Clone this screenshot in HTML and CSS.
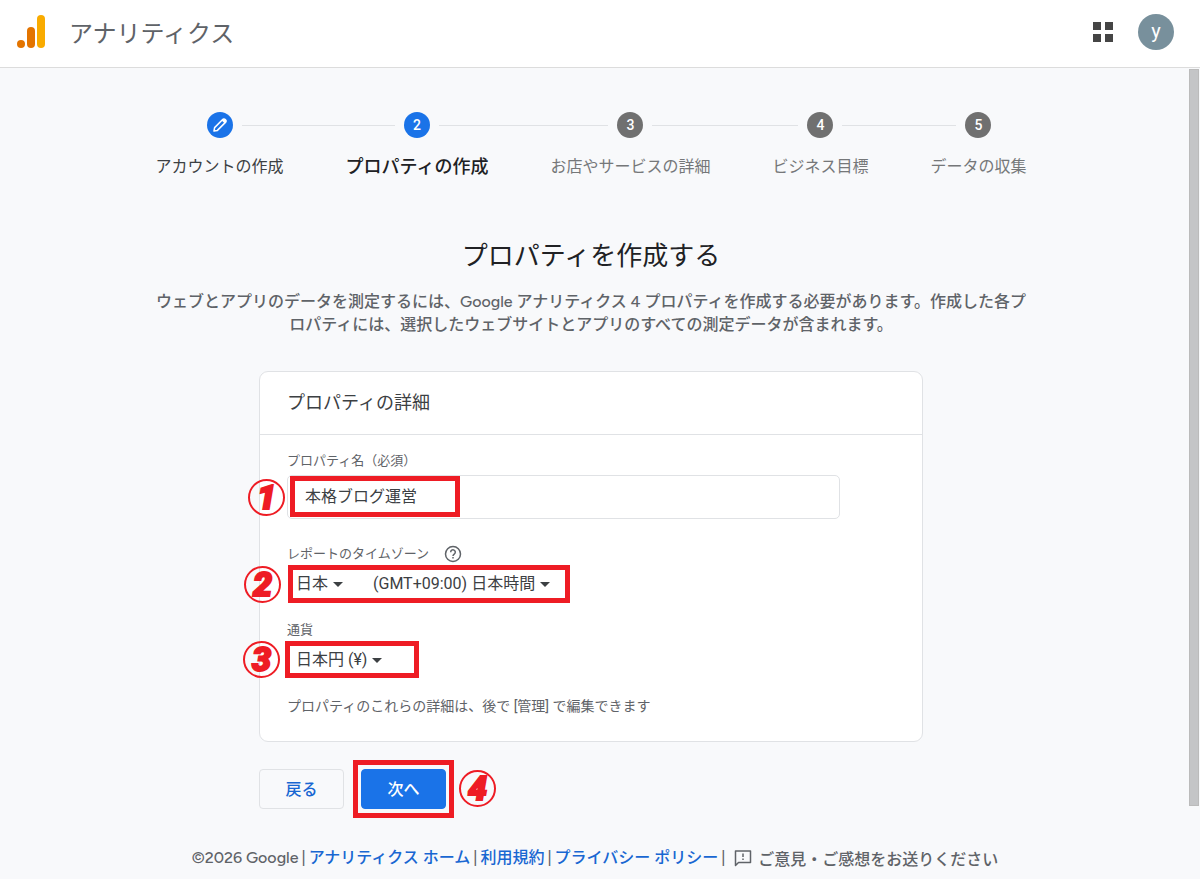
FILE: index.html
```html
<!DOCTYPE html>
<html lang="ja">
<head>
  <meta charset="UTF-8">
  <meta name="viewport" content="width=device-width, initial-scale=1.0">
  <title>アナリティクス</title>
  <link rel="stylesheet" href="styles.css">
</head>
<body>
  <header class="topbar">
    <a href="#" class="brand">
      <svg class="logo" width="30" height="34" viewBox="0 0 30 34">
        <rect x="20" y="0" width="8" height="33" rx="4" fill="#f9ab00"/>
        <rect x="10" y="12" width="8" height="21" rx="4" fill="#e37400"/>
        <circle cx="4" cy="29" r="4" fill="#e37400"/>
      </svg>
      <span>アナリティクス</span>
    </a>
    <div class="topbar-right">
      <button type="button" class="apps" aria-label="アプリ">
        <svg width="22" height="22" viewBox="0 0 22 22" fill="#454545">
          <rect x="1" y="1" width="8" height="8"/>
          <rect x="13" y="1" width="8" height="8"/>
          <rect x="1" y="13" width="8" height="8"/>
          <rect x="13" y="13" width="8" height="8"/>
        </svg>
      </button>
      <button type="button" class="avatar">y</button>
    </div>
  </header>

  <div class="page">
    <div class="content">
      <ol class="stepper">
        <li class="step done">
          <div class="step-head">
            <span class="dot">
              <svg width="18" height="18" viewBox="0 0 18 18">
                <path d="M3 15l.6-3.400L11.900 3.300a1.400 1.400 0 0 1 2 0l.8.800a1.400 1.400 0 0 1 0 2L6.400 14.400z" fill="none" stroke="#fff" stroke-width="1.500" stroke-linejoin="round"/>
                <path d="M10.700 4.500l2.800 2.800 1.400-1.400a1.400 1.400 0 0 0 0-1.800l-1-1a1.400 1.400 0 0 0-1.800 0z" fill="#fff"/>
              </svg>
            </span>
          </div>
          <span class="step-label">アカウントの作成</span>
        </li>
        <li class="step current">
          <div class="step-head"><span class="dot">2</span></div>
          <span class="step-label">プロパティの作成</span>
        </li>
        <li class="step">
          <div class="step-head"><span class="dot">3</span></div>
          <span class="step-label">お店やサービスの詳細</span>
        </li>
        <li class="step">
          <div class="step-head"><span class="dot">4</span></div>
          <span class="step-label">ビジネス目標</span>
        </li>
        <li class="step">
          <div class="step-head"><span class="dot">5</span></div>
          <span class="step-label">データの収集</span>
        </li>
      </ol>

      <h1>プロパティを作成する</h1>
      <p class="intro">ウェブとアプリのデータを測定するには、Google アナリティクス 4 プロパティを作成する必要があります。作成した各プロパティには、選択したウェブサイトとアプリのすべての測定データが含まれます。</p>

      <form class="property-form">
        <section class="card">
          <h2>プロパティの詳細</h2>
          <div class="card-body">
            <label for="propName">プロパティ名（必須）</label>
            <div class="field name-field">
              <input type="text" id="propName" value="本格ブログ運営">
              <span class="mark mark-1"></span>
              <span class="num num-1">1</span>
            </div>

            <div class="label-row">
              <label for="country">レポートのタイムゾーン</label>
              <svg width="18" height="18" viewBox="0 0 18 18" fill="none" stroke="#5f6368" stroke-width="1.500">
                <circle cx="9" cy="9" r="7.500"/>
                <path d="M6.700 7.200a2.300 2.300 0 1 1 3.700 1.800c-.9.700-1.400 1-1.400 2"/>
                <path d="M9 12v1.600"/>
              </svg>
            </div>
            <div class="field select-row">
              <div class="picker">
                <select id="country"><option>日本</option></select>
                <svg width="10" height="5" viewBox="0 0 10 5"><path d="M0 0h10L5 5z" fill="#3c4043"/></svg>
              </div>
              <div class="picker">
                <select aria-label="タイムゾーン"><option>(GMT+09:00) 日本時間</option></select>
                <svg width="10" height="5" viewBox="0 0 10 5"><path d="M0 0h10L5 5z" fill="#3c4043"/></svg>
              </div>
              <span class="mark mark-2"></span>
              <span class="num num-2">2</span>
            </div>

            <label for="currency" class="currency-label">通貨</label>
            <div class="field select-row">
              <div class="picker">
                <select id="currency"><option>日本円 (¥)</option></select>
                <svg width="10" height="5" viewBox="0 0 10 5"><path d="M0 0h10L5 5z" fill="#3c4043"/></svg>
              </div>
              <span class="mark mark-3"></span>
              <span class="num num-3">3</span>
            </div>

            <p class="hint">プロパティのこれらの詳細は、後で [管理] で編集できます</p>
          </div>
        </section>

        <div class="actions">
          <button type="button" class="btn">戻る</button>
          <div class="next-wrap">
            <button type="submit" class="btn primary">次へ</button>
            <span class="mark mark-4"></span>
            <span class="num num-4">4</span>
          </div>
        </div>
      </form>

      <footer class="footer">
        <span>©2026 Google</span>
        <span>|</span>
        <a href="#">アナリティクス ホーム</a>
        <span>|</span>
        <a href="#">利用規約</a>
        <span>|</span>
        <a href="#">プライバシー ポリシー</a>
        <span>|</span>
        <button type="button" class="feedback">
          <svg width="18" height="18" viewBox="0 0 18 18" fill="none" stroke="#5f6368" stroke-width="1.500">
            <path d="M1.500 16.500V2h15v11.500h-12z" stroke-linejoin="round"/>
            <path d="M9 4.500v3.500M9 9.500v1.600"/>
          </svg>
          <span>ご意見・ご感想をお送りください</span>
        </button>
      </footer>
    </div>
    <div class="scroll-track"><div class="scroll-thumb"></div></div>
  </div>
</body>
</html>
```
FILE: styles.css
```css
* {
  box-sizing: border-box;
}

body {
  margin: 0;
  min-height: 100vh;
  display: flex;
  flex-direction: column;
  font-family: Roboto, "Noto Sans CJK JP", sans-serif;
  font-size: 16px;
  color: #3c4043;
  background-color: #f8f9fb;
}

button,
input,
select {
  font-family: inherit;
  font-size: 16px;
  margin: 0;
}

button {
  cursor: pointer;
}

svg {
  display: block;
  flex-shrink: 0;
}

/* Top bar */
.topbar {
  display: flex;
  align-items: center;
  justify-content: space-between;
  height: 68px;
  padding: 0 26px 4px 17px;
  background-color: #fff;
  border-bottom: 1px solid #dcdcdc;
}

.brand {
  display: flex;
  align-items: center;
  gap: 22px;
  font-size: 24px;
  line-height: 36px;
  color: #5f6368;
  text-decoration: none;
}

.brand span {
  padding-top: 4px;
}

.topbar-right {
  display: flex;
  align-items: center;
  gap: 24px;
}

.apps {
  padding: 0;
  border: none;
  background: none;
}

.avatar {
  width: 36px;
  height: 36px;
  padding: 0 0 2px;
  border: none;
  border-radius: 50%;
  font-size: 20px;
  color: #fff;
  background-color: #78909c;
}

/* Page and scrollbar */
.page {
  flex: 1;
  display: flex;
}

.content {
  flex: 1;
  min-width: 0;
  padding-top: 44px;
}

.scroll-track {
  width: 18px;
  padding: 1px 1px 0 7px;
}

.scroll-thumb {
  height: 91%;
  background-color: #c4c5c7;
  border: 1px solid #bbb;
}

/* Stepper */
.stepper {
  display: flex;
  justify-content: center;
  margin: 0;
  padding: 0;
  list-style: none;
}

.step-head {
  display: flex;
  align-items: center;
  gap: 9px;
}

.step-head::before,
.step-head::after {
  content: "";
  flex: 1;
  height: 1px;
  background-color: #e0e2e5;
}

.step:first-child .step-head::before,
.step:last-child .step-head::after {
  background-color: transparent;
}

.dot {
  display: flex;
  align-items: center;
  justify-content: center;
  width: 26px;
  height: 26px;
  border-radius: 50%;
  font-size: 14px;
  font-weight: 500;
  color: #fff;
  background-color: #707070;
}

.done .dot,
.current .dot {
  background-color: #1a73e8;
}

.step-label {
  display: block;
  margin-top: 16px;
  padding: 0 31px;
  line-height: 26px;
  color: #757779;
}

.done .step-label {
  color: #3c4043;
}

.current .step-label {
  font-size: 18px;
  font-weight: 500;
  color: #202124;
}

h1 {
  margin: 56px 0 0;
  text-align: center;
  font-size: 26px;
  font-weight: 400;
  line-height: 40px;
  color: #202124;
}

.intro {
  max-width: 880px;
  margin: 14px auto 0;
  text-align: center;
  font-family: Figtree, "Open Sans", "Noto Sans CJK JP", sans-serif;
  font-weight: 500;
  line-height: 23px;
  color: #5f6368;
}

/* Card */
.property-form {
  max-width: 664px;
  margin: 35px auto 0;
}

.card {
  background-color: #fff;
  border: 1px solid #e0e2e5;
  border-radius: 9px;
}

h2 {
  margin: 0;
  padding: 16px 27px;
  font-size: 18px;
  font-weight: 400;
  line-height: 30px;
  border-bottom: 1px solid #e0e2e5;
}

.card-body {
  padding: 16px 27px 25px;
}

label {
  display: block;
  font-size: 13px;
  line-height: 20px;
  color: #5f6368;
}

.field {
  position: relative;
}

.name-field {
  max-width: 553px;
  margin-top: 4px;
}

.name-field input {
  width: 100%;
  height: 44px;
  padding: 0 17px 4px;
  color: #3c4043;
  background-color: #fff;
  border: 1px solid #e0e2e5;
  border-radius: 5px;
}

.label-row {
  display: flex;
  align-items: center;
  gap: 15px;
  margin-top: 25px;
}

.select-row {
  display: flex;
  align-items: center;
  gap: 30px;
  height: 40px;
  padding-left: 9px;
}

.picker {
  display: flex;
  align-items: center;
  gap: 4px;
}

select {
  appearance: none;
  padding: 0;
  border: none;
  line-height: 24px;
  color: #3c4043;
  background: none;
}

.currency-label {
  margin-top: 16px;
}

.hint {
  margin: 16px 0 0;
  font-size: 14px;
  line-height: 20px;
  color: #5f6368;
}

/* Buttons */
.actions {
  display: flex;
  gap: 17px;
  margin-top: 27px;
}

.btn {
  width: 85px;
  height: 40px;
  padding: 0 0 2px;
  font-weight: 500;
  color: #1967d2;
  background-color: #f8f9fb;
  border: 1px solid #e0e2e5;
  border-radius: 4px;
}

.btn.primary {
  display: block;
  color: #fff;
  background-color: #1a73e8;
  border-color: #1a73e8;
}

.next-wrap {
  position: relative;
}

/* Red guide boxes and numbers over the form */
.mark {
  position: absolute;
  border: 5px solid #ee1c24;
  pointer-events: none;
}

.mark-1 {
  top: 1px;
  left: 3px;
  width: 170px;
  height: 41px;
}

.mark-2 {
  top: 1px;
  left: 1px;
  width: 282px;
  height: 38px;
}

.mark-3 {
  top: 1px;
  left: -2px;
  width: 134px;
  height: 37px;
}

.mark-4 {
  top: -9px;
  left: -8px;
  width: 101px;
  height: 58px;
}

.num {
  position: absolute;
  width: 37px;
  height: 37px;
  border: 2px solid #ee1c24;
  border-radius: 50%;
  font-family: Roboto, sans-serif;
  font-size: 34px;
  font-style: italic;
  font-weight: 900;
  line-height: 33px;
  text-align: center;
  color: #ee1c24;
  -webkit-text-stroke: 2px #ee1c24;
}

.num-1 {
  top: 4px;
  left: -39px;
}

.num-2 {
  top: 2px;
  left: -43px;
}

.num-3 {
  top: 1px;
  left: -44px;
}

.num-4 {
  top: 1px;
  left: 98px;
}

/* Footer */
.footer {
  display: flex;
  justify-content: center;
  align-items: center;
  gap: 3px;
  margin-top: 36px;
  padding-left: 8px;
  font-family: Figtree, Roboto, "Noto Sans CJK JP", sans-serif;
  font-weight: 500;
  line-height: 26px;
  white-space: nowrap;
  color: #5f6368;
}

.footer a {
  color: #1967d2;
  text-decoration: none;
}

.feedback {
  display: flex;
  align-items: center;
  gap: 6px;
  padding: 0 0 0 6px;
  border: none;
  font-weight: 500;
  color: #5f6368;
  background: none;
}
```
